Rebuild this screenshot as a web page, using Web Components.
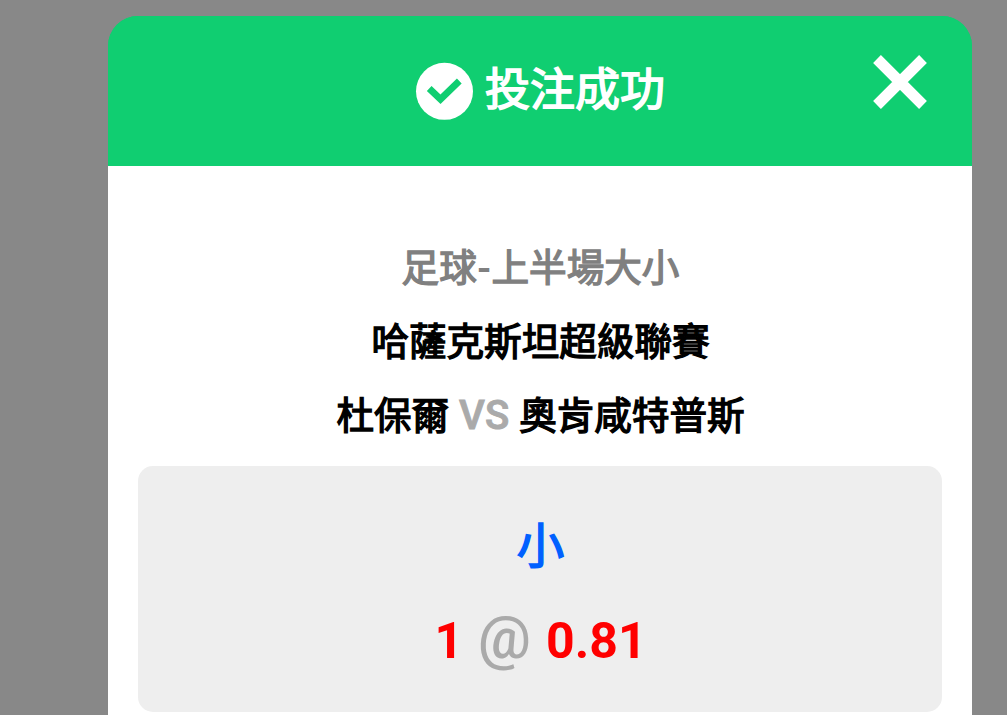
<!DOCTYPE html>
<html lang="zh-Hant">
<head>
<meta charset="utf-8">
<title>投注成功</title>
<style>
    html, body {
        margin: 0;
        height: 100%;
        overflow: hidden;
    }
    body {
        background: #888;
        font-family: Roboto, "Noto Sans CJK TC", sans-serif;
        font-weight: 400;
    }
</style>
</head>
<body>
<bet-dialog>
    <bet-header slot="header">投注成功</bet-header>
    <bet-match>
        <span slot="sport">足球</span>
        <span slot="market">上半場大小</span>
        <span slot="league">哈薩克斯坦超級聯賽</span>
        <span slot="home">杜保爾</span>
        <span slot="away">奧肯咸特普斯</span>
    </bet-match>
    <bet-pick>
        <span slot="pick">小</span>
        <span slot="line">1</span>
        <span slot="odds">0.81</span>
    </bet-pick>
</bet-dialog>
<script>
class BetDialog extends HTMLElement {
    constructor() {
        super();
        this.attachShadow({ mode: 'open' });
        this.shadowRoot.innerHTML = `<style>
        :host {
            display: flex;
            flex-direction: column;
            box-sizing: border-box;
            width: 864px;
            height: 100%;
            margin: 0 0 0 108px;
            padding-top: 16px;
        }
        section {
            flex: 1;
            border-radius: 30px 30px 0 0;
            background: linear-gradient(#10ce71 100px, #fff 100px);
            overflow: hidden;
        }
        .content {
            padding: 65px 30px 0;
            background: #fff;
        }
        </style>
        <section>
            <slot name="header"></slot>
            <div class="content"><slot></slot></div>
        </section>`;
    }
}

class BetHeader extends HTMLElement {
    constructor() {
        super();
        this.attachShadow({ mode: 'open' });
        this.shadowRoot.innerHTML = `<style>
        :host {
            display: grid;
            grid-template-columns: 1fr auto 1fr;
            height: 150px;
            background: #10ce71;
            color: #fff;
            font-size: 45px;
            line-height: 60px;
        }
        .title {
            grid-column: 2;
            display: flex;
            align-items: center;
            column-gap: 12px;
            -webkit-text-stroke: 1.6px;
        }
        .title svg {
            width: 58px;
            height: 58px;
        }
        button {
            justify-self: end;
            align-self: start;
            margin: 39px 45px 0 0;
            padding: 0;
            border: 0;
            background: none;
            color: inherit;
            line-height: 0;
        }
        button svg {
            width: 54px;
            height: 54px;
        }
        </style>
        <div class="title">
            <svg viewBox="0 0 58 58"><circle cx="29.5" cy="29.3" r="28.5" fill="currentColor"/><path d="M14.2 26.5L25.5 37.3L44.3 19" fill="none" stroke="#10ce71" stroke-width="6.8"/></svg>
            <slot></slot>
        </div>
        <button type="button" aria-label="關閉">
            <svg viewBox="0 0 54 54"><path d="M4 4L50 50M50 4L4 50" fill="none" stroke="currentColor" stroke-width="11"/></svg>
        </button>`;
    }
}

class BetMatch extends HTMLElement {
    constructor() {
        super();
        this.attachShadow({ mode: 'open' });
        this.shadowRoot.innerHTML = `<style>
        :host {
            display: block;
            padding-left: 1px;
            font-size: 37.6px;
            line-height: 74px;
            text-align: center;
            white-space: nowrap;
            color: #000;
            -webkit-text-stroke: 1.4px;
        }
        .row {
            display: flex;
            justify-content: center;
            height: 74px;
        }
        .market {
            color: #808080;
        }
        .dash {
            font-weight: 700;
            -webkit-text-stroke: 0;
        }
        .teams {
            column-gap: 10px;
        }
        .vs {
            font-size: 40px;
            font-weight: 500;
            color: #aaa;
            -webkit-text-stroke: 0.9px;
        }
        </style>
        <div class="row market"><slot name="sport"></slot><span class="dash">-</span><slot name="market"></slot></div>
        <div class="row league"><slot name="league"></slot></div>
        <div class="row teams"><slot name="home"></slot><span class="vs">VS</span><slot name="away"></slot></div>`;
    }
}

class BetPick extends HTMLElement {
    constructor() {
        super();
        this.attachShadow({ mode: 'open' });
        this.shadowRoot.innerHTML = `<style>
        :host {
            display: flex;
            flex-direction: column;
            box-sizing: border-box;
            height: 246px;
            margin-top: 13px;
            padding: 34px 0 0 1px;
            border-radius: 15px;
            background: #eee;
            font-size: 50px;
            line-height: 94px;
            text-align: center;
        }
        .pick {
            height: 91px;
            font-size: 47.5px;
            color: #0060ff;
            -webkit-text-stroke: 1.6px;
        }
        .odds {
            display: flex;
            justify-content: center;
            align-items: baseline;
            column-gap: 15px;
            height: 94px;
            font-weight: 700;
            color: #f00;
        }
        .at {
            font-size: 59px;
            font-weight: 500;
            color: #aaa;
        }
        </style>
        <div class="pick"><slot name="pick"></slot></div>
        <div class="odds"><slot name="line"></slot><span class="at">@</span><slot name="odds"></slot></div>`;
    }
}

window.customElements.define('bet-dialog', BetDialog);
window.customElements.define('bet-header', BetHeader);
window.customElements.define('bet-match', BetMatch);
window.customElements.define('bet-pick', BetPick);
</script>
</body>
</html>
